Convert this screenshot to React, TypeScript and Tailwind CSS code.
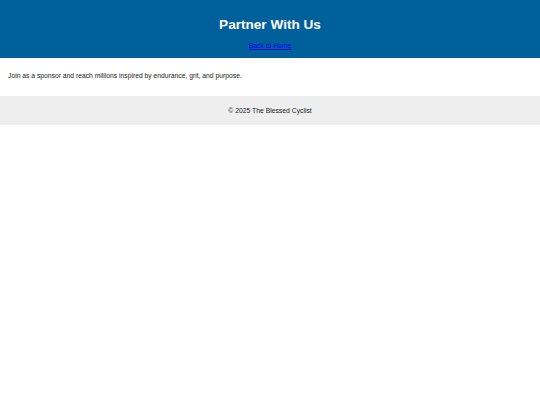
export default function App() {
  return (
    <div className="min-h-[405px] bg-white font-['Liberation_Sans',Arial,sans-serif] text-[#222]">
      <header className="flex h-[58px] flex-col items-center bg-[#00609c] pt-[17px] text-white">
        <h1 className="text-[13.6px] font-bold leading-[16px]">Partner With Us</h1>
        <a href="#" className="mt-[9px] text-[6.8px] leading-[8px] text-[#0000ee] underline">
          Back to Home
        </a>
      </header>
      <p className="mt-[14px] px-[8px] text-[6.75px] leading-[8px]">
        Join as a sponsor and reach millions inspired by endurance, grit, and purpose.
      </p>
      <footer className="mt-[16px] flex h-[29px] items-center justify-center bg-[#eeeeee] text-[6.8px] leading-[8px]">
        © 2025 The Blessed Cyclist
      </footer>
    </div>
  );
}
